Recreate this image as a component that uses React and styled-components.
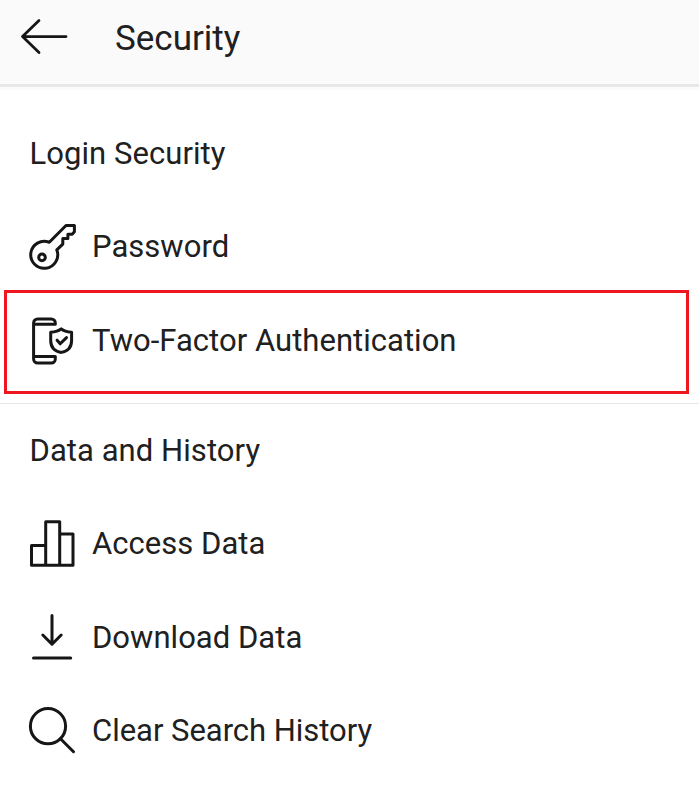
import React from 'react';
import styled, { createGlobalStyle } from 'styled-components';

const GlobalStyle = createGlobalStyle`
  * { box-sizing: border-box; }
  body { margin: 0; background: #fff; }
`;

const Screen = styled.main`
  width: 699px;
  height: 800px;
  overflow: hidden;
  background: #fff;
  color: #202020;
  font-family: Roboto, sans-serif;
`;

const Header = styled.header`
  display: flex;
  align-items: center;
  height: 87px;
  padding: 0 0 11px 20px;
  background: #fafafa;
  border-bottom: 3px solid #e9e7e7;
  box-shadow: 0 3px 0 #fbfbfb;
`;

const BackButton = styled.button`
  display: flex;
  width: 50px;
  height: 40px;
  margin: 0 45px 0 0;
  padding: 0;
  border: 0;
  background: none;
  color: #161616;
`;

const Title = styled.h1`
  margin: 4px 0 0;
  font-size: 35px;
  font-weight: 400;
  line-height: 50px;
`;

const Section = styled.section`
  padding-top: ${({ $first }) => ($first ? '20px' : '0')};
  height: ${({ $first }) => ($first ? '316px' : 'auto')};
  border-top: ${({ $first }) => ($first ? 'none' : '1px solid #e8e8e8')};
`;

const Heading = styled.h2`
  display: flex;
  align-items: center;
  height: 93.5px;
  margin: 0;
  padding-left: 29.5px;
  font-size: 31px;
  font-weight: 400;
  letter-spacing: 0.06px;
`;

const Row = styled.div`
  position: relative;
  display: flex;
  align-items: center;
  gap: 16px;
  height: 93.5px;
  padding-left: 28px;
`;

const Label = styled.span`
  font-size: 31px;
  line-height: 40px;
  letter-spacing: ${({ $spacing }) => $spacing || '0.03px'};
  white-space: nowrap;
`;

const Highlight = styled.div`
  position: absolute;
  top: -4px;
  left: 4px;
  width: 685px;
  height: 104px;
  border: 3px solid #ee1720;
`;

const Icon = styled.svg`
  flex: none;
  width: 48px;
  height: 48px;
  overflow: visible;
  fill: none;
  stroke: #161616;
  stroke-width: 3;
  stroke-linecap: round;
  stroke-linejoin: round;
`;

const Arrow = styled.svg`
  width: 50px;
  height: 40px;
  fill: none;
  stroke: currentColor;
  stroke-width: 2.8;
  stroke-linecap: round;
  stroke-linejoin: round;
`;

const KeyIcon = () => (
  <Icon viewBox="0 0 48 48">
    <path d="M21.3 19.3 38 2.5h8.4v6.3l-2.2 2.4h-4.3v4.3h-5.1v5.6l-6 5.8A13.5 13.5 0 1 1 21.3 19.3Z" />
    <circle cx="14" cy="34.4" r="3.3" />
  </Icon>
);

const PhoneShieldIcon = () => (
  <Icon viewBox="0 0 48 48">
    <path d="M27.3 7.3V5.9a4 4 0 0 0-4-4H9.6a4 4 0 0 0-4 4v36.2a4 4 0 0 0 4 4h13.7a4 4 0 0 0 4-4v-2.5M5.6 7.3h21.7M5.6 39.6h21.7" />
    <path d="M33.2 11.8c-2.8 2.3-6 3-10.5 3.4v8.2c0 7.2 4 10.8 10.5 12 6.4-1.2 10.4-4.8 10.4-12v-8.2c-4.4-.4-7.7-1.1-10.4-3.4Z" />
    <path d="m29.1 23.2 3.1 3.6 6.3-6.2" />
  </Icon>
);

const ChartIcon = () => (
  <Icon viewBox="0 0 48 48">
    <path d="M3.5 45.3V25.6h14.2v19.7M17.7 45.3V1.8h14v43.5M31.7 14h13.3v31.3H3.5" />
  </Icon>
);

const DownloadIcon = () => (
  <Icon viewBox="0 0 48 48">
    <path d="M24 1.4v28.8M14.8 21l9.2 9.2 9.2-9.2M5.5 44h37.2" />
  </Icon>
);

const SearchIcon = () => (
  <Icon viewBox="0 0 48 48">
    <circle cx="20" cy="19.2" r="17.6" />
    <path d="M32.5 31.7 45.5 44.7" />
  </Icon>
);

const Item = ({ icon: Glyph, label, spacing, highlighted }) => (
  <Row>
    <Glyph />
    <Label $spacing={spacing}>{label}</Label>
    {highlighted && <Highlight />}
  </Row>
);

export default function App() {
  return (
    <>
      <GlobalStyle />
      <Screen>
        <Header>
          <BackButton aria-label="Back">
            <Arrow viewBox="0 0 50 40">
              <path d="M19 3.6 2.5 19.6 19 35.6M2.5 19.6H46" />
            </Arrow>
          </BackButton>
          <Title>Security</Title>
        </Header>
        <Section $first>
          <Heading>Login Security</Heading>
          <Item icon={KeyIcon} label="Password" />
          <Item icon={PhoneShieldIcon} label="Two-Factor Authentication" highlighted />
        </Section>
        <Section>
          <Heading>Data and History</Heading>
          <Item icon={ChartIcon} label="Access Data" />
          <Item icon={DownloadIcon} label="Download Data" />
          <Item icon={SearchIcon} label="Clear Search History" spacing="-0.03px" />
        </Section>
      </Screen>
    </>
  );
}
